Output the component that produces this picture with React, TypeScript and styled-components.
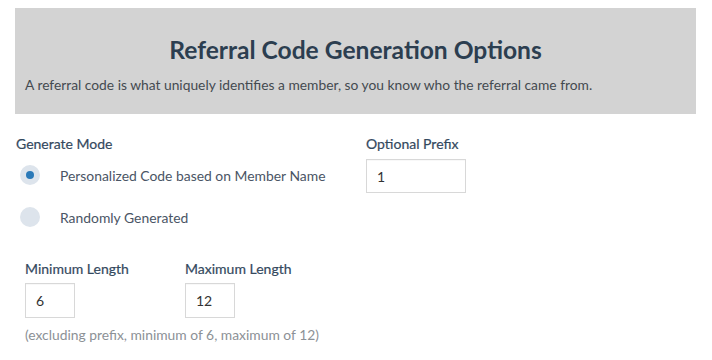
import React from "react";
import styled, { createGlobalStyle } from "styled-components";

const Global = createGlobalStyle`
  html, body { margin: 0; padding: 0; background: #ffffff; }
  body { font-family: Lato, "Open Sans", sans-serif; }
  * { box-sizing: border-box; }
`;

const Page = styled.div`
  padding: 8px 16px 0 15px;
  width: 712px;
`;

const Header = styled.header`
  background: #d3d3d3;
  height: 106px;
  padding: 27px 10px 0 10px;
`;

const Title = styled.h1`
  margin: 0;
  font-size: 24.6px;
  line-height: 29px;
  font-weight: 700;
  color: #2c3e50;
  text-align: center;
`;

const Description = styled.p`
  margin: 12px 0 0 0;
  font-size: 13.8px;
  line-height: 17px;
  color: #444a50;
`;

const FormRow = styled.div`
  display: grid;
  grid-template-columns: 350px 1fr;
  margin-top: 21px;
  margin-left: 1px;
`;

const Column = styled.div<{ $gap?: number }>`
  display: flex;
  flex-direction: column;
  gap: ${(p) => p.$gap ?? 0}px;
`;

const Label = styled.label`
  display: block;
  font-size: 14px;
  line-height: 17px;
  font-weight: 400;
  color: #34495e;
  -webkit-text-stroke: 0.2px #34495e;
`;

const RadioGroup = styled.div`
  display: flex;
  flex-direction: column;
  margin-top: 2px;
`;

const RadioRow = styled.div`
  display: flex;
  align-items: center;
  height: 42px;
  padding-left: 4px;
  gap: 20px;
`;

const RadioDot = styled.span<{ $checked?: boolean }>`
  width: 20px;
  height: 20px;
  border-radius: 50%;
  background: #dde4ec;
  display: flex;
  align-items: center;
  justify-content: center;
  flex: none;
  &::after {
    content: "";
    width: 8px;
    height: 8px;
    border-radius: 50%;
    background: ${(p) => (p.$checked ? "#2a79b8" : "transparent")};
  }
`;

const RadioText = styled.span`
  font-size: 13.9px;
  color: #4a5565;
`;

const TextInput = styled.div<{ $w: number; $h: number }>`
  width: ${(p) => p.$w}px;
  height: ${(p) => p.$h}px;
  border: 1px solid #d8d8d8;
  box-shadow: inset 0 1px 1px rgba(0, 0, 0, 0.03);
  background: #fff;
  display: flex;
  align-items: center;
  padding-left: 10px;
  font-size: 14px;
  color: #333;
`;

const LengthRow = styled.div`
  display: flex;
  margin-top: 22px;
  padding-left: 10px;
`;

const LengthField = styled.div`
  width: 160px;
  display: flex;
  flex-direction: column;
  gap: 6px;
`;

const Note = styled.p`
  margin: 8px 0 0 10px;
  font-size: 13.85px;
  line-height: 17px;
  color: #8c9196;
`;

export default function App() {
  return (
    <>
      <Global />
      <Page>
        <Header>
          <Title>Referral Code Generation Options</Title>
          <Description>
            A referral code is what uniquely identifies a member, so you know who the referral came from.
          </Description>
        </Header>
        <FormRow>
          <Column>
            <Label>Generate Mode</Label>
            <RadioGroup>
              <RadioRow>
                <RadioDot $checked />
                <RadioText>Personalized Code based on Member Name</RadioText>
              </RadioRow>
              <RadioRow>
                <RadioDot />
                <RadioText>Randomly Generated</RadioText>
              </RadioRow>
            </RadioGroup>
          </Column>
          <Column $gap={7}>
            <Label>Optional Prefix</Label>
            <TextInput $w={100} $h={34}>1</TextInput>
          </Column>
        </FormRow>
        <LengthRow>
          <LengthField>
            <Label>Minimum Length</Label>
            <TextInput $w={50} $h={35}>6</TextInput>
          </LengthField>
          <LengthField>
            <Label>Maximum Length</Label>
            <TextInput $w={50} $h={35}>12</TextInput>
          </LengthField>
        </LengthRow>
        <Note>(excluding prefix, minimum of 6, maximum of 12)</Note>
      </Page>
    </>
  );
}
